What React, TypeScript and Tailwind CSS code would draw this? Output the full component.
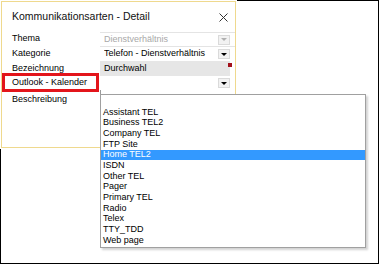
const entries = [
  'Assistant TEL',
  'Business TEL2',
  'Company TEL',
  'FTP Site',
  'Home TEL2',
  'ISDN',
  'Other TEL',
  'Pager',
  'Primary TEL',
  'Radio',
  'Telex',
  'TTY_TDD',
  'Web page',
];

function ComboButton({ disabled = false }: { disabled?: boolean }) {
  return (
    <span className="flex h-[10px] w-[12px] shrink-0 items-center justify-center border border-[#dadada] bg-[#f2f2f2]">
      <svg width="6" height="3" viewBox="0 0 6 3">
        <path d="M0 0h6L3 3z" fill={disabled ? '#b0b0b0' : '#000'} />
      </svg>
    </span>
  );
}

export default function App() {
  const labelStyles = 'flex items-center pl-[10px] text-[9px] text-black';

  return (
    <div
      className="relative h-[264px] w-[379px] border border-black bg-white"
      style={{ fontFamily: '"Liberation Sans", Arial, sans-serif' }}
    >
      {/* Dialog */}
      <div className="-ml-px -mt-px h-[149px] w-[237px] bg-white p-px">
        <div className="h-[147px] w-[235px] border border-[#efd98e] bg-white">
          <div className="flex h-[30px] items-center justify-between pl-[10px] pr-[7px]">
            <span className="text-[10.5px] text-[#111]">Kommunikationsarten - Detail</span>
            <svg width="9" height="9" viewBox="0 0 9 9" stroke="#333" strokeWidth="1">
              <path d="M0.5 0.5l8 8M8.5 0.5l-8 8" />
            </svg>
          </div>

          <div className="grid grid-cols-[98px_1fr]">
            <div className={`${labelStyles} h-[14px]`}>Thema</div>
            <div className="flex h-[14px] items-center border-t border-[#e4e4e4] pl-[4px] pr-[5px]">
              <span className="flex-1 truncate text-[9px] text-[#a8a8a8]">Dienstverhältnis</span>
              <ComboButton disabled />
            </div>

            <div className={`${labelStyles} h-[15px]`}>Kategorie</div>
            <div className="flex h-[15px] items-center border-t border-[#e4e4e4] pl-[4px] pr-[5px]">
              <span className="flex-1 truncate pr-[2px] text-[9px] text-black">
                Telefon - Dienstverhältnis
              </span>
              <ComboButton />
            </div>

            <div className={`${labelStyles} h-[15px]`}>Bezeichnung</div>
            <div className="relative flex h-[15px] items-center pr-[5px]">
              <div className="flex h-full flex-1 items-center bg-[#e6e6e6] pl-[4px] text-[9px] text-black">
                Durchwahl
              </div>
              <span className="absolute right-[3px] top-[2px] h-[4px] w-[4px] bg-[#a3111b]" />
            </div>

            <div className={`${labelStyles} h-[14px]`}>Outlook - Kalender</div>
            <div className="flex h-[14px] items-center justify-end pr-[5px]">
              <ComboButton />
            </div>

            <div className={`${labelStyles} h-[18px] items-start pt-[3px]`}>Beschreibung</div>
            <div className="h-[56px] border-l border-[#9a9a9a]" />
          </div>
        </div>
      </div>

      {/* Annotation */}
      <div className="absolute left-[1px] top-[72px] h-[19px] w-[97px] border-[3px] border-[#e3151b]" />

      {/* Open dropdown list */}
      <div className="absolute left-[99px] top-[93px] h-[154px] w-[266px] border border-[#a0a0a0] bg-white pt-[12px] shadow-[2px_2px_2px_rgba(0,0,0,0.18)]">
        {entries.map((entry) => (
          <div
            key={entry}
            className={`flex h-[10.7px] items-center pl-[2px] text-[9px] ${
              entry === 'Home TEL2' ? 'bg-[#3399ff] text-white' : 'text-black'
            }`}
          >
            {entry}
          </div>
        ))}
      </div>
    </div>
  );
}
